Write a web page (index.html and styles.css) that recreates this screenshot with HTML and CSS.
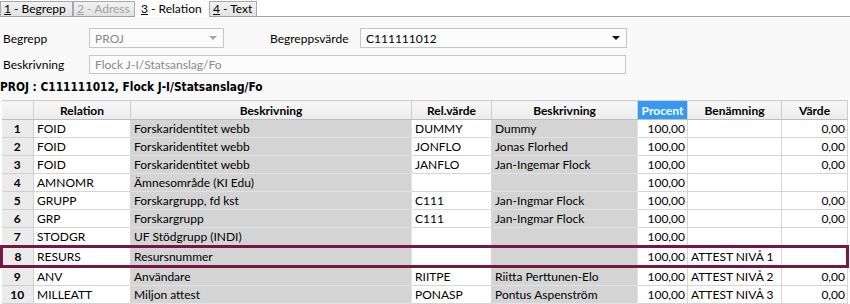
FILE: index.html
```html
<!DOCTYPE html>
<html lang="sv">
<head>
<meta charset="utf-8">
<title>Relation</title>
<link rel="stylesheet" href="styles.css">
</head>
<body>
<div class="tabs">
  <div class="tab t1"><u>1</u> - Begrepp</div>
  <div class="tab t2 disabled"><u>2</u> - Adress</div>
  <div class="tab t3 active"><u>3</u> - Relation</div>
  <div class="tab t4"><u>4</u> - Text</div>
  <div class="tab-fill"></div>
</div>

<div class="form">
  <div class="form-row">
    <div class="label">Begrepp</div>
    <div class="combo combo-small disabled">
      <span class="combo-text">PROJ</span>
      <span class="arrow"></span>
    </div>
    <div class="label label2">Begreppsvärde</div>
    <div class="combo combo-wide">
      <span class="combo-text">C111111012</span>
      <span class="arrow"></span>
    </div>
  </div>
  <div class="form-row">
    <div class="label">Beskrivning</div>
    <div class="input disabled">Flock J-I/Statsanslag/Fo</div>
  </div>
</div>

<div class="title">PROJ : C111111012, Flock J-I/Statsanslag/Fo</div>

<table class="grid">
  <colgroup>
    <col class="c-num"><col class="c-rel"><col class="c-besk"><col class="c-relv"><col class="c-besk2"><col class="c-proc"><col class="c-ben"><col class="c-varde">
  </colgroup>
  <thead>
    <tr>
      <th></th><th>Relation</th><th>Beskrivning</th><th>Rel.värde</th><th>Beskrivning</th><th class="sel">Procent</th><th>Benämning</th><th>Värde</th>
    </tr>
  </thead>
  <tbody>
    <tr><td class="num">1</td><td>FOID</td><td class="ro">Forskaridentitet webb</td><td>DUMMY</td><td class="ro">Dummy</td><td class="r">100,00</td><td></td><td class="r">0,00</td></tr>
    <tr><td class="num">2</td><td>FOID</td><td class="ro">Forskaridentitet webb</td><td>JONFLO</td><td class="ro">Jonas Florhed</td><td class="r">100,00</td><td></td><td class="r">0,00</td></tr>
    <tr><td class="num">3</td><td>FOID</td><td class="ro">Forskaridentitet webb</td><td>JANFLO</td><td class="ro">Jan-Ingemar Flock</td><td class="r">100,00</td><td></td><td class="r">0,00</td></tr>
    <tr><td class="num">4</td><td>AMNOMR</td><td class="ro">Ämnesområde (KI Edu)</td><td></td><td class="ro"></td><td class="r">100,00</td><td></td><td></td></tr>
    <tr><td class="num">5</td><td>GRUPP</td><td class="ro">Forskargrupp, fd kst</td><td>C111</td><td class="ro">Jan-Ingmar Flock</td><td class="r">100,00</td><td></td><td class="r">0,00</td></tr>
    <tr><td class="num">6</td><td>GRP</td><td class="ro">Forskargrupp</td><td>C111</td><td class="ro">Jan-Ingmar Flock</td><td class="r">100,00</td><td></td><td class="r">0,00</td></tr>
    <tr><td class="num">7</td><td>STODGR</td><td class="ro">UF Stödgrupp (INDI)</td><td></td><td class="ro"></td><td class="r">100,00</td><td></td><td></td></tr>
    <tr class="current"><td class="num">8</td><td>RESURS</td><td class="ro">Resursnummer</td><td></td><td class="ro"></td><td class="r">100,00</td><td>ATTEST NIVÅ 1</td><td></td></tr>
    <tr><td class="num">9</td><td>ANV</td><td class="ro">Användare</td><td>RIITPE</td><td class="ro">Riitta Perttunen-Elo</td><td class="r">100,00</td><td>ATTEST NIVÅ 2</td><td class="r">0,00</td></tr>
    <tr><td class="num">10</td><td>MILLEATT</td><td class="ro">Miljon attest</td><td>PONASP</td><td class="ro">Pontus Aspenström</td><td class="r">100,00</td><td>ATTEST NIVÅ 3</td><td class="r">0,00</td></tr>
  </tbody>
</table>
</body>
</html>
```

FILE: styles.css
```css
html, body {
  margin: 0;
  padding: 0;
}
body {
  width: 850px;
  height: 304px;
  overflow: hidden;
  background: #f9f9f9;
  font-family: Lato, "Open Sans", sans-serif;
  font-size: 12px;
  color: #000;
}

/* Tabs */
.tabs {
  display: flex;
  align-items: flex-end;
  height: 17px;
  background: #fff;
}
.tab {
  box-sizing: border-box;
  height: 16px;
  line-height: 14px;
  padding: 0 0 0 3px;
  border: 1px solid #a9a9a9;
  border-bottom-color: #a0a0a0;
  background: linear-gradient(#f2f2f2, #e2e2e2);
  white-space: nowrap;
}
.tab.t1 { width: 73px; }
.tab.t2 { width: 62px; }
.tab.t3 { width: 72px; margin-left: 1px; }
.tab.t4 { width: 48px; margin-left: 1px; }
.tab.disabled { color: #a3a3a3; }
.tab.active {
  height: 17px;
  line-height: 16px;
  background: #fff;
  border-color: #fff;
  border-bottom: none;
  padding-left: 4px;
}
.tab-fill {
  flex: 1;
  height: 1px;
  background: #a0a0a0;
}

/* Form */
.form {
  padding-top: 11px;
  display: flex;
  flex-direction: column;
  gap: 6px;
}
.form-row {
  display: flex;
  align-items: center;
  height: 20px;
}
.label {
  width: 89px;
  padding-left: 3px;
  box-sizing: border-box;
}
.label2 {
  width: 90px;
  padding-left: 0;
  margin-left: 46px;
}
.combo, .input {
  box-sizing: border-box;
  height: 20px;
  border: 1px solid #c6c6c6;
  background: #fbfbfb;
  display: flex;
  align-items: center;
  padding: 0 5px;
}
.combo-small { width: 135px; }
.combo-wide { width: 267px; background: #fcfcfc; }
.input { width: 537px; height: 19px; }
.combo-text { flex: 1; }
.disabled .combo-text, .input.disabled { color: #8a8a8a; }
.arrow {
  width: 0;
  height: 0;
  border-left: 4px solid transparent;
  border-right: 4px solid transparent;
  border-top: 4px solid #111;
  margin-right: 1px;
}
.disabled .arrow { border-top-color: #a5a5a5; }

/* Title */
.title {
  margin-top: 6px;
  height: 20px;
  line-height: 15px;
  font-family: "DejaVu Sans Condensed", "DejaVu Sans", sans-serif;
  font-weight: bold;
  font-size: 11.8px;
}

/* Grid */
.grid {
  border-collapse: collapse;
  table-layout: fixed;
  width: 847px;
  background: #fff;
}
.c-num { width: 32px; }
.c-rel { width: 97px; }
.c-besk { width: 281px; }
.c-relv { width: 80px; }
.c-besk2 { width: 146px; }
.c-proc { width: 50px; }
.c-ben { width: 94px; }
.c-varde { width: 66px; }

.grid th, .grid td {
  border: 1px solid #d6d6d6;
  padding: 0 3px;
  white-space: nowrap;
  overflow: hidden;
}
.grid th {
  height: 18px;
  background: linear-gradient(#f7f7f7, #ececec);
  font-weight: bold;
  text-align: center;
  border-color: #cfcfcf;
  border-bottom-color: #bdbdbd;
}
.grid th:first-child { border-left: none; }
.grid th.sel {
  background: #3399f3;
  color: #fff;
}
.grid td {
  height: 17px;
  line-height: 16px;
}
.grid td:first-child { border-left: none; }
.grid td.num {
  background: #ebebeb;
  font-weight: bold;
  text-align: center;
  border-color: #d0d0d0;
}
.grid td.ro { background: #d4d4d4; border-color: #e2e2e2; }
.grid td.r { text-align: right; padding-right: 2px; }
.grid tr.current td {
  border-top: 3px solid #741a42;
  border-bottom: 3px solid #741a42;
}
.grid tr.current td:first-child { border-left: 3px solid #741a42; }
.grid tr.current td:last-child { border-right: 3px solid #741a42; }
```
